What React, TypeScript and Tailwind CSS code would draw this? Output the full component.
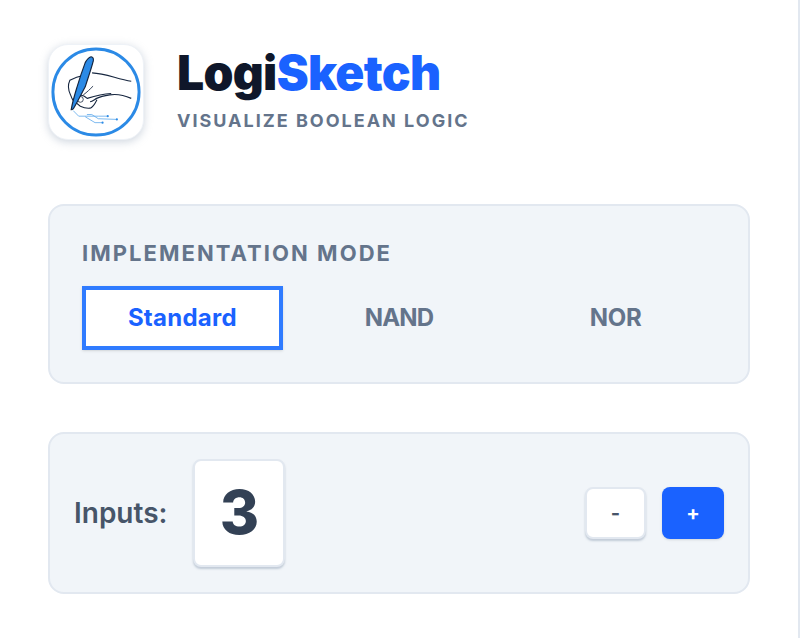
import React from 'react';

function Logo() {
  return (
    <div className="w-24 h-24 rounded-[20px] bg-white flex items-center justify-center shadow-[0_2px_8px_rgba(148,163,184,0.45)] border border-[#eef2f7]">
      <svg viewBox="0 0 96 96" className="w-24 h-24" fill="none">
        <circle cx="48" cy="48" r="44" stroke="#2b8ae6" strokeWidth="3" />
        <path d="M44 28.5 C58 29 70 35 84 37" stroke="#16263f" strokeWidth="1.1" />
        <path d="M35.5 31 C30 32 25 34 21.3 36 C19 41 20 47 22 51 C23 54 24 56 25.5 58" stroke="#16263f" strokeWidth="1.1" />
        <path d="M84 54.5 C76 51 68 50 62 51 C56 52 52 53 48.7 54.5 C46 56 44 57.5 42 58" stroke="#16263f" strokeWidth="1.2" />
        <path d="M63.5 49.5 C55 50 47 52 39 54.5 C36 52 34 51 32 51.5" stroke="#16263f" strokeWidth="1.1" />
        <path d="M45 42 C42 45 39 48 35 51 M37 39 C36 43 34 47 31 50" stroke="#16263f" strokeWidth="0.9" />
        <path d="M49 56 C47 60 45 64 42 64.5 C38 65 35 64 32 62.5 C30 61 28 59.5 27 58" stroke="#16263f" strokeWidth="1.1" />
        <circle cx="32" cy="55.5" r="3" stroke="#16263f" strokeWidth="0.8" />
        <path d="M43 12 C40 13 38 16 37 18 C34 26 31 35 28.7 42.7 C26.5 50 24 58 22.7 66 C24 66 25 65 25.3 64.3 C29 58 33 50 37 42.7 C40 33 43 25 45.3 16 C45.5 14 45 12 43 12 Z" fill="#2b8ae6" stroke="#16263f" strokeWidth="1.2" />
        <path d="M24.7 67 L30.3 72.7 H45 L50.3 72.7 H60 M38.7 71 H43.7 L50.3 75.3 L69.3 76 M37 73.3 L47 79.3 H54.7" stroke="#5aa6ea" strokeWidth="0.8" />
        <circle cx="60" cy="72.7" r="1.1" fill="#2b8ae6" />
        <circle cx="69.3" cy="76" r="1.1" fill="#2b8ae6" />
        <circle cx="54.7" cy="79.3" r="1.1" fill="#2b8ae6" />
      </svg>
    </div>
  );
}

export default function App() {
  return (
    <div className="w-[800px] h-[638px] bg-white border-r-2 border-[#e2e8f0] px-12 pt-11 font-['Inter',sans-serif] overflow-hidden">
      <header className="flex items-center gap-[33px]">
        <Logo />
        <div className="-mt-[4px]">
          <h1 className="text-[48px] leading-[56px] font-black tracking-[-0.7px] text-[#0f172a]">
            Logi<span className="text-[#1a62ff]">Sketch</span>
          </h1>
          <p className="mt-[6px] text-[18px] leading-7 font-bold tracking-[2px] text-[#64748b]">VISUALIZE BOOLEAN LOGIC</p>
        </div>
      </header>

      <section className="mt-16 rounded-2xl border-2 border-[#e2e8f0] bg-[#f1f5f9] px-8 pt-[33px] h-[180px]">
        <h2 className="text-[22px] leading-[28px] font-bold tracking-[2.05px] text-[#64748b]">IMPLEMENTATION MODE</h2>
        <div className="mt-[19px] grid grid-cols-3 gap-4">
          <button className="h-16 border-4 border-[#2f7bff] bg-white text-[24px] font-bold tracking-[0.25px] text-[#1a62ff] shadow-sm">Standard</button>
          <button className="h-16 text-[24px] font-bold tracking-[-0.8px] text-[#64748b]">NAND</button>
          <button className="h-16 text-[24px] font-bold tracking-[-0.3px] text-[#64748b]">NOR</button>
        </div>
      </section>

      <section className="mt-12 h-[162px] rounded-2xl border-2 border-[#e2e8f0] bg-[#f1f5f9] px-6 flex items-center">
        <span className="text-[28px] font-semibold text-[#475569]">Inputs:</span>
        <div className="ml-[26px] w-[92px] h-[108px] rounded-lg bg-white border-2 border-[#e2e8f0] shadow-[0_2px_2px_rgba(148,163,184,0.5)] flex items-center justify-center pb-0.5 text-[60px] font-extrabold text-[#334155]">3</div>
        <div className="ml-auto flex gap-4">
          <button className="w-[61px] h-[52px] rounded-lg bg-white border-2 border-[#e2e8f0] shadow-[0_2px_2px_rgba(148,163,184,0.5)] text-[20px] font-bold text-[#475569]">-</button>
          <button className="w-[62px] h-[52px] rounded-lg bg-[#1a62ff] shadow-sm text-[20px] font-bold text-white">+</button>
        </div>
      </section>
    </div>
  );
}
